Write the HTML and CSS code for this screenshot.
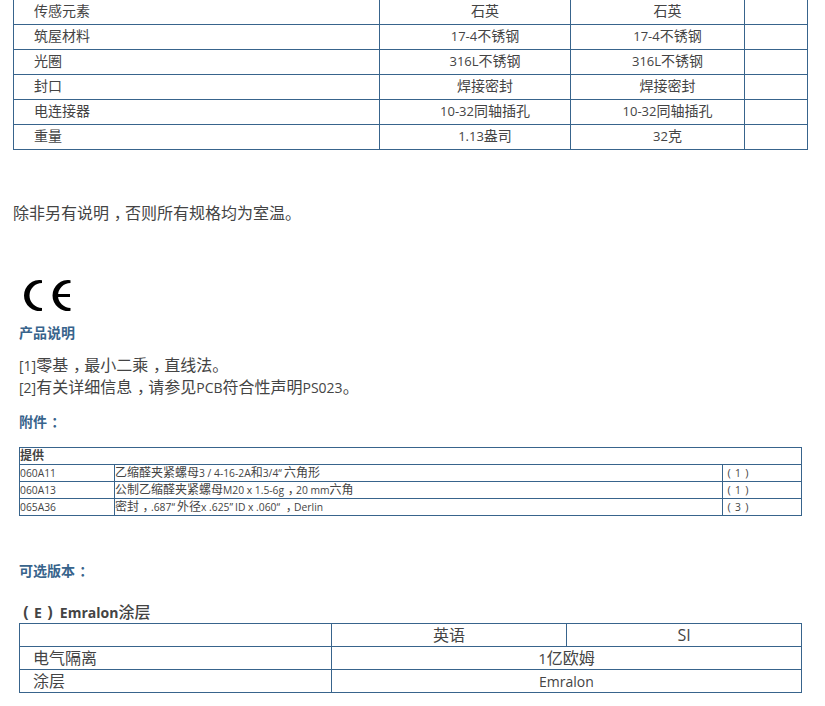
FILE: index.html
```html
<!DOCTYPE html>
<html lang="zh-CN">
<head>
<meta charset="utf-8">
<title>规格</title>
<link rel="stylesheet" href="styles.css">
</head>
<body>
<table class="grid spec">
<colgroup><col class="s1"><col class="s2"><col class="s3"><col class="s4"></colgroup>
<tr class="clipped"><td class="label">传感元素</td><td>石英</td><td>石英</td><td></td></tr>
<tr><td class="label">筑屋材料</td><td><span class="lat">17-4</span>不锈钢</td><td><span class="lat">17-4</span>不锈钢</td><td></td></tr>
<tr><td class="label">光圈</td><td><span class="lat">316L</span>不锈钢</td><td><span class="lat">316L</span>不锈钢</td><td></td></tr>
<tr><td class="label">封口</td><td>焊接密封</td><td>焊接密封</td><td></td></tr>
<tr><td class="label">电连接器</td><td><span class="lat">10-32</span>同轴插孔</td><td><span class="lat">10-32</span>同轴插孔</td><td></td></tr>
<tr><td class="label">重量</td><td><span class="lat">1.13</span>盎司</td><td><span class="lat">32</span>克</td><td></td></tr>
</table>
<p class="note">除非另有说明<span class="pn">，</span>否则所有规格均为室温。</p>
<main class="notes">
<svg class="ce" width="48" height="31" viewBox="0 0 48 31" role="img" aria-label="CE">
<path d="M18 .2A15.500 15.500 0 1 0 18 30.800V28A12.500 12.500 0 1 1 18 3Z" fill="#000"/>
<path d="M46.500 .2A15.500 15.500 0 1 0 46.500 30.800V28A12.500 12.500 0 1 1 46.500 3Z" fill="#000"/>
<path d="M33 14H46V17H33Z" fill="#000"/>
</svg>
<h4 class="head first">产品说明</h4>
<p class="body"><span class="lat-b">[1]</span>零基<span class="pn">，</span>最小二乘<span class="pn">，</span>直线法。<br><span class="lat-b">[2]</span>有关详细信息<span class="pn">，</span>请参见<span class="lat-b">PCB</span>符合性声明<span class="lat-b">PS023</span>。</p>
<h4 class="head acc">附件<span class="pn">：</span></h4>
<table class="grid parts">
<colgroup><col class="p1"><col class="p2"><col class="p3"></colgroup>
<tr><th colspan="3">提供</th></tr>
<tr><td>060A11</td><td><span class="cj">乙缩醛夹紧螺母</span>3 / 4-16-2A<span class="cj">和</span>3/4<span class="q">“</span><span class="cj">六角形</span></td><td><span class="fw">(</span>1<span class="fw">)</span></td></tr>
<tr><td>060A13</td><td><span class="cj">公制乙缩醛夹紧螺母</span>M20 x 1.5-6g<span class="cj pn">，</span>20 mm<span class="cj">六角</span></td><td><span class="fw">(</span>1<span class="fw">)</span></td></tr>
<tr><td>065A36</td><td><span class="cj">密封</span><span class="cj pn">，</span>.687<span class="q">“</span><span class="cj">外径</span>x .625<span class="q">”</span>ID x .060<span class="q">“</span><span class="cj pn">，</span>Derlin</td><td><span class="fw">(</span>3<span class="fw">)</span></td></tr>
</table>
<h4 class="head opt">可选版本<span class="pn">：</span></h4>
<h3 class="option"><span class="fw-lg">(</span>E<span class="fw-lg">)</span><span class="name">Emralon</span><span class="cj-lg">涂层</span></h3>
<table class="grid coat">
<colgroup><col class="c1"><col class="c2"><col class="c3"></colgroup>
<tr><td></td><td>英语</td><td>SI</td></tr>
<tr><td class="label">电气隔离</td><td colspan="2"><span class="lat-c">1</span>亿欧姆</td></tr>
<tr><td class="label">涂层</td><td colspan="2"><span class="lat-b">Emralon</span></td></tr>
</table>
</main>
</body>
</html>
```

FILE: styles.css
```css
html, body {
  margin: 0;
  padding: 0;
  background: #fff;
}
body {
  height: 706px;
  overflow: hidden;
  color: #444;
  font-family: "Open Sans", "Noto Sans CJK SC", sans-serif;
}
.pn {
  padding-left: .3em;
  letter-spacing: -.3em;
  line-height: 0;
}
.q { letter-spacing: 2px; }
.lat, .lat-b, .lat-c, .cj, .fw, .fw-lg, .cj-lg { line-height: 0; }
.lat { font-size: 13px; }
.lat-b { font-size: 14px; }
.lat-c { font-size: 15px; }
.grid {
  border-collapse: collapse;
  table-layout: fixed;
  text-align: center;
}
.grid td, .grid th {
  border: 1px solid #38648c;
  padding: 0;
}
.spec {
  margin-left: 13px;
  width: 794px;
  font-size: 14px;
}
.s1 { width: 366px; }
.s2 { width: 191px; }
.s3 { width: 174px; }
.s4 { width: 63px; }
.spec tr { height: 25px; }
.spec .clipped { height: 24px; }
.spec .clipped td { border-top: 0; }
.spec td {
  padding: 0 0 1px 20px;
  line-height: 20px;
}
.spec .label { text-align: left; }
.note {
  margin: 51px 0 0 13px;
  font-size: 16px;
  line-height: 24px;
}
.notes {
  padding: 0 23px 0 19px;
}
.ce {
  display: block;
  margin: 55px 0 0 5px;
}
.head {
  margin: 0;
  color: #38648c;
  font-size: 14px;
  line-height: 20px;
  font-weight: 700;
}
.first { margin-top: 12px; }
.body {
  margin: 11px 0 0;
  font-size: 16px;
  line-height: 22px;
}
.acc { margin-top: 14px; }
.parts {
  margin-top: 15px;
  width: 782px;
  font-size: 10.300px;
  text-align: left;
}
.p1 { width: 95px; }
.p2 { width: 608px; }
.p3 { width: 79px; }
.parts tr { height: 17px; }
.parts td, .parts th { line-height: 16px; }
.parts th {
  font-size: 12px;
  font-weight: 700;
}
.cj {
  font-family: "Noto Sans CJK SC", sans-serif;
  font-size: 12px;
}
.fw {
  display: inline-block;
  width: 12px;
  text-align: center;
  font-size: 11px;
}
.opt { margin-top: 45px; }
.option {
  margin: 21px 0 0 -1px;
  font-size: 14px;
  line-height: 21px;
  font-weight: 700;
}
.fw-lg {
  display: inline-block;
  width: 16px;
  text-align: center;
  font-size: 16px;
}
.name { margin-left: 2px; }
.cj-lg {
  font-size: 16px;
  font-weight: 500;
}
.coat {
  width: 782px;
  font-size: 16px;
}
.c1 { width: 312px; }
.c2 { width: 235px; }
.c3 { width: 235px; }
.coat tr { height: 23px; }
.coat td { line-height: 22px; }
.coat .label {
  padding-left: 13px;
  text-align: left;
}
```
